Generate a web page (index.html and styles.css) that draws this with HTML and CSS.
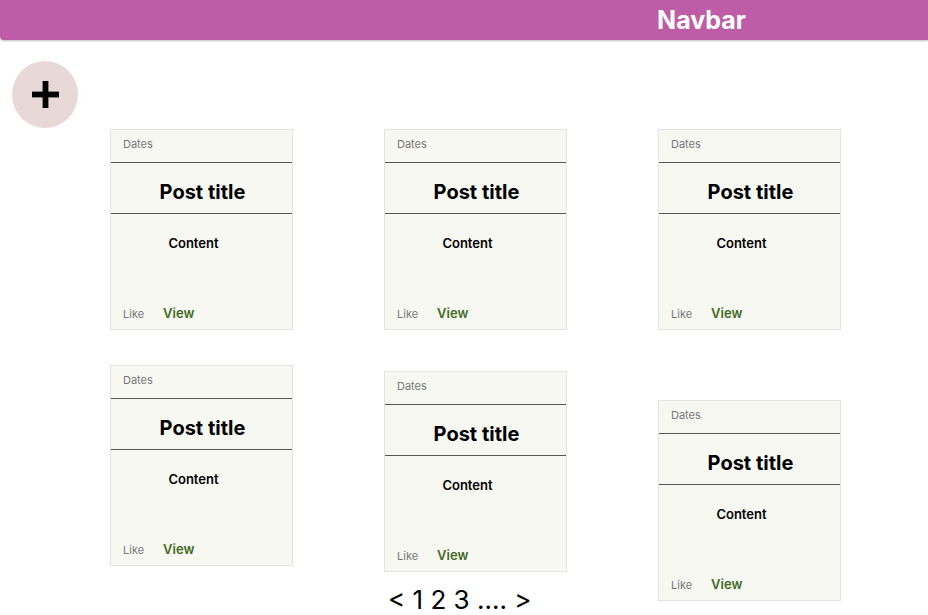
FILE: index.html
```html
<!DOCTYPE html>
<html lang="en">
<head>
<meta charset="utf-8">
<title>Posts</title>
<link rel="stylesheet" href="styles.css">
</head>
<body>
<header class="navbar"><span class="navbar-title">Navbar</span></header>
<div class="toolbar">
  <button class="add-btn" aria-label="Add post">
    <svg width="28" height="28" viewBox="0 0 28 28"><rect x="0" y="11" width="28" height="6" fill="#000"/><rect x="11" y="0" width="6" height="28" fill="#000"/></svg>
  </button>
</div>
<main class="board">
  <div class="column">
    <article class="card">
      <div class="card-date">Dates</div>
      <h2 class="card-title">Post title</h2>
      <div class="card-body">Content</div>
      <div class="card-actions"><span class="like">Like</span><span class="view">View</span></div>
    </article>
    <article class="card card-gap-a">
      <div class="card-date">Dates</div>
      <h2 class="card-title">Post title</h2>
      <div class="card-body">Content</div>
      <div class="card-actions"><span class="like">Like</span><span class="view">View</span></div>
    </article>
  </div>
  <div class="column">
    <article class="card">
      <div class="card-date">Dates</div>
      <h2 class="card-title">Post title</h2>
      <div class="card-body">Content</div>
      <div class="card-actions"><span class="like">Like</span><span class="view">View</span></div>
    </article>
    <article class="card card-gap-b">
      <div class="card-date">Dates</div>
      <h2 class="card-title">Post title</h2>
      <div class="card-body">Content</div>
      <div class="card-actions"><span class="like">Like</span><span class="view">View</span></div>
    </article>
    <nav class="pagination">&lt; 1 2 3 .... &gt;</nav>
  </div>
  <div class="column">
    <article class="card">
      <div class="card-date">Dates</div>
      <h2 class="card-title">Post title</h2>
      <div class="card-body">Content</div>
      <div class="card-actions"><span class="like">Like</span><span class="view">View</span></div>
    </article>
    <article class="card card-gap-c">
      <div class="card-date">Dates</div>
      <h2 class="card-title">Post title</h2>
      <div class="card-body">Content</div>
      <div class="card-actions"><span class="like">Like</span><span class="view">View</span></div>
    </article>
  </div>
</main>
</body>
</html>
```
FILE: styles.css
```css
* { box-sizing: border-box; }
html, body { margin: 0; padding: 0; background: #fff; }
body { font-family: Inter, "Noto Sans", sans-serif; color: #000; width: 928px; height: 615px; overflow: hidden; }

.navbar {
  height: 40px;
  background: #bf5ca8;
  border-bottom-left-radius: 4px;
  box-shadow: 0 1px 2px rgba(0,0,0,0.25);
  display: flex;
  align-items: center;
  justify-content: flex-end;
  padding-right: 182px;
}
.navbar-title { color: #fff; font-weight: 700; font-size: 25px; line-height: 30px; }

.toolbar { height: 89px; padding: 21px 0 0 12px; }
.add-btn {
  width: 66px; height: 67px; border-radius: 50%;
  background: #e8d8d8; border: none; padding: 0;
  display: flex; align-items: center; justify-content: center;
}
.add-btn svg { width: 27px; height: 27px; margin-top: -1px; }

.board { display: flex; gap: 91px; padding-left: 110px; align-items: flex-start; }
.column { width: 183px; display: flex; flex-direction: column; }

.card {
  height: 201px;
  background: #f8f8f3;
  border: 1px solid #e3e3e0;
  display: flex; flex-direction: column;
}
.card-gap-a { margin-top: 35px; }
.card-gap-b { margin-top: 41px; }
.card-gap-c { margin-top: 70px; }

.card-date {
  height: 33px;
  border-bottom: 1px solid #555;
  padding: 7px 0 0 12px;
  font-size: 11px; line-height: 14px; color: #777;
}
.card-title {
  margin: 0;
  height: 51px;
  border-bottom: 1px solid #555;
  padding: 16px 0 0 2px;
  text-align: center;
  font-size: 20px; line-height: 26px; font-weight: 700;
}
.card-body {
  flex: 1;
  padding: 21px 16px 0 0;
  text-align: center;
  font-size: 13px; line-height: 16px; font-weight: 600;
}
.card-actions {
  display: flex; align-items: baseline; gap: 19px;
  padding: 0 0 7px 12px;
}
.like { font-size: 11px; line-height: 16px; color: #777; }
.view { font-size: 13px; line-height: 16px; color: #3f6b1f; font-weight: 600; }

.pagination {
  margin-top: 14px;
  padding-left: 4px;
  font-size: 26px; line-height: 28px; color: #000; white-space: nowrap;
}
```
